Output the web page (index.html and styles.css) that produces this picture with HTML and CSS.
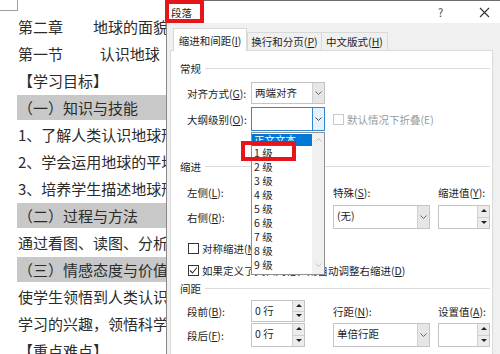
FILE: index.html
```html
<!DOCTYPE html>
<html lang="zh-CN">
<head>
    <meta charset="UTF-8">
    <title>段落</title>
    <link rel="stylesheet" href="styles.css">
</head>
<body>
<div class="page">
    <div class="doc">
        <div class="corner"></div>
        <p class="ln">第二章　　地球的面貌</p>
        <p class="ln">第一节　　&nbsp;&nbsp;认识地球</p>
        <p class="ln">【学习目标】</p>
        <p class="ln hl">（一）知识与技能</p>
        <p class="ln">1、了解人类认识地球形状的过程</p>
        <p class="ln">2、学会运用地球的平均半径</p>
        <p class="ln">3、培养学生描述地球形状</p>
        <p class="ln hl">（二）过程与方法</p>
        <p class="ln">通过看图、读图、分析</p>
        <p class="ln hl">（三）情感态度与价值观</p>
        <p class="ln">使学生领悟到人类认识</p>
        <p class="ln">学习的兴趣，领悟科学</p>
        <p class="ln">【重点难点】</p>
    </div>

    <div class="dlg">
        <div class="titlebar">
            <span class="ttl">段落</span>
            <span class="help">?</span>
            <svg class="close" width="11" height="11" viewBox="0 0 11 11">
                <path d="M1 1 L10 10 M10 1 L1 10" stroke="#333" stroke-width="1.1" fill="none"/>
            </svg>
        </div>
        <div class="mark mark-title"></div>

        <div class="tabs">
            <div class="tab active">缩进和间距(<u>I</u>)</div>
            <div class="tab t2">换行和分页(<u>P</u>)</div>
            <div class="tab t3">中文版式(<u>H</u>)</div>
        </div>

        <div class="panel">
            <div class="group g1"><span>常规</span><i></i></div>

            <div class="row r1">
                <span class="lbl">对齐方式(<u>G</u>):</span>
                <div class="sel"><span>两端对齐</span><b class="arr"><svg width="7" height="4" viewBox="0 0 7 4"><polyline points="0.5,0.5 3.5,3.5 6.5,0.5" fill="none" stroke="#666"/></svg></b></div>
            </div>

            <div class="row r2">
                <span class="lbl">大纲级别(<u>O</u>):</span>
                <div class="sel focus"><span></span><b class="arr"><svg width="7" height="4" viewBox="0 0 7 4"><polyline points="0.5,0.5 3.5,3.5 6.5,0.5" fill="none" stroke="#444"/></svg></b></div>
                <label class="cb off span2"><i class="box"></i>默认情况下折叠(E)</label>
            </div>

            <div class="group g2"><span>缩进</span><i></i></div>

            <div class="row r3">
                <span class="lbl">左侧(<u>L</u>):</span>
                <span></span>
                <span class="lbl">特殊(<u>S</u>):</span>
                <span class="lbl">缩进值(<u>Y</u>):</span>
            </div>

            <div class="row r4">
                <span class="lbl">右侧(<u>R</u>):</span>
                <span></span>
                <div class="sel"><span>(无)</span><b class="arr"><svg width="7" height="4" viewBox="0 0 7 4"><polyline points="0.5,0.5 3.5,3.5 6.5,0.5" fill="none" stroke="#666"/></svg></b></div>
                <div class="spin"><span></span><b class="btns"><em class="up"></em><em class="dn"></em></b></div>
            </div>

            <label class="cb c1"><i class="box"></i>对称缩进(<u>M</u>)</label>
            <label class="cb c2"><i class="box"><svg width="9" height="9" viewBox="0 0 9 9"><polyline points="1,4.5 3.5,7 8,1.5" fill="none" stroke="#333" stroke-width="1.1"/></svg></i>如果定义了文档网格，则自动调整右缩进(<u>D</u>)</label>

            <div class="group g3"><span>间距</span><i></i></div>

            <div class="row r5">
                <span class="lbl">段前(<u>B</u>):</span>
                <div class="spin short"><span>0 行</span><b class="btns"><em class="up"></em><em class="dn"></em></b></div>
                <span class="lbl">行距(<u>N</u>):</span>
                <span class="lbl">设置值(<u>A</u>):</span>
            </div>

            <div class="row r6">
                <span class="lbl">段后(<u>F</u>):</span>
                <div class="spin short"><span>0 行</span><b class="btns"><em class="up"></em><em class="dn"></em></b></div>
                <div class="sel"><span>单倍行距</span><b class="arr"><svg width="7" height="4" viewBox="0 0 7 4"><polyline points="0.5,0.5 3.5,3.5 6.5,0.5" fill="none" stroke="#666"/></svg></b></div>
                <div class="spin"><span></span><b class="btns"><em class="up"></em><em class="dn"></em></b></div>
            </div>

            <!-- 展开的下拉列表 -->
            <div class="dropdown">
                <ul>
                    <li class="cur">正文文本</li>
                    <li>1 级</li>
                    <li>2 级</li>
                    <li>3 级</li>
                    <li>4 级</li>
                    <li>5 级</li>
                    <li>6 级</li>
                    <li>7 级</li>
                    <li>8 级</li>
                    <li>9 级</li>
                </ul>
                <div class="sbar">
                    <svg width="7" height="4" viewBox="0 0 7 4"><polyline points="0.5,3.5 3.5,0.5 6.5,3.5" fill="none" stroke="#c2c2c2"/></svg>
                    <svg width="7" height="4" viewBox="0 0 7 4"><polyline points="0.5,0.5 3.5,3.5 6.5,0.5" fill="none" stroke="#c2c2c2"/></svg>
                </div>
            </div>
            <div class="mark mark-item"></div>
        </div>
    </div>
</div>
</body>
</html>
```

FILE: styles.css
```css
* {
    margin: 0;
    padding: 0;
    box-sizing: border-box;
}

body {
    background: #fff;
    font-family: "Noto Sans CJK SC", "Noto Sans", sans-serif;
}

.page {
    display: flex;
    width: 500px;
    height: 354px;
    overflow: hidden;
}

/* 左侧文档 */
.doc {
    flex: none;
    width: 166px;
    overflow: hidden;
    background: #fff;
}

.corner {
    width: 18px;
    height: 11px;
    margin-bottom: 2px;
    border-right: 1px solid #a0a0a0;
    border-bottom: 1px solid #a0a0a0;
}

.ln {
    height: 27px;
    line-height: 27px;
    padding-left: 18px;
    font-size: 15px;
    color: #2b2b2b;
    white-space: nowrap;
}

.hl {
    height: 25px;
    line-height: 25px;
    margin: 1px 0 1px 17px;
    padding-left: 1px;
    background: #c8c8c8;
}

/* 对话框 */
.dlg {
    position: relative;
    flex: 1;
    background: #f0f0f0;
    border-left: 1px solid #8a8a8a;
    font-size: 10.5px;
    color: #1e1e1e;
}

.titlebar {
    display: flex;
    align-items: center;
    height: 23px;
    background: #fff;
    border-top: 1px solid #6e6e6e;
    padding-left: 4px;
}

.ttl {
    font-size: 10.5px;
}

.help {
    margin-left: auto;
    width: 10px;
    font-size: 11px;
    color: #444;
}

.close {
    margin: 0 11px 0 31px;
}

.mark {
    position: absolute;
    border: 4px solid #e8141b;
}

.mark-title {
    left: -2px;
    top: 0;
    width: 39px;
    height: 23px;
}

.tabs {
    display: flex;
    align-items: flex-end;
    height: 27px;
    padding-left: 6px;
}

.tab {
    flex: none;
    height: 18px;
    line-height: 17px;
    border: 1px solid #d9d9d9;
    border-bottom: none;
    background: #f0f0f0;
    text-align: center;
    white-space: nowrap;
}

.tab.active {
    position: relative;
    z-index: 2;
    width: 74px;
    height: 23px;
    line-height: 24px;
    margin-bottom: -1px;
    background: #fff;
}

.t2 {
    width: 75px;
}

.t3 {
    width: 66px;
    border-left: none;
}

.panel {
    position: relative;
    height: 320px;
    margin: 0 8px 0 3px;
    padding: 0 2px 0 9px;
    background: #fff;
    border: 1px solid #dadada;
}

.group {
    display: flex;
    align-items: center;
    height: 14px;
}

.group i {
    flex: 1;
    margin-left: 4px;
    border-top: 1px solid #dcdcdc;
}

.g1 { margin-top: 10px; }
.g2 { margin-top: 28px; }
.g3 { margin-top: 4px; }

.row {
    display: grid;
    grid-template-columns: 56px 74px 97px 52px;
    column-gap: 8px;
    align-items: center;
    padding-left: 7px;
}

.r1 { height: 22px; margin-top: 7px; }
.r2 { height: 24px; margin-top: 3px; }
.r3 { height: 14px; margin-top: 12px; }
.r4 { height: 24px; margin-top: 6px; }
.r5 { height: 22px; margin-top: 5px; }
.r6 { height: 24px; margin-top: 1px; }

.lbl {
    white-space: nowrap;
}

.span2 {
    grid-column: 3 / 5;
}

.sel, .spin {
    display: flex;
    height: 100%;
    border: 1px solid #c4c4c4;
    background: #fff;
}

.sel span, .spin span {
    flex: 1;
    padding-left: 3px;
    line-height: 20px;
    white-space: nowrap;
}

.arr {
    display: flex;
    align-items: center;
    justify-content: center;
    width: 12px;
    border-left: 1px solid #d0d0d0;
    background: #e6e6e6;
}

.sel.focus {
    border-color: #2f86d6;
}

.sel.focus .arr {
    background: #e5f1fb;
    border-left-color: #2f86d6;
}

.spin.short {
    width: 54px;
}

.btns {
    display: flex;
    flex-direction: column;
    width: 12px;
    border-left: 1px solid #d0d0d0;
}

.btns em {
    flex: 1;
    position: relative;
    background: #ececec;
}

.btns em + em {
    border-top: 1px solid #d0d0d0;
}

.btns em::after {
    content: "";
    position: absolute;
    left: 3px;
    top: 50%;
    margin-top: -2px;
    border-left: 3px solid transparent;
    border-right: 3px solid transparent;
}

.btns .up::after {
    border-bottom: 3px solid #222;
}

.btns .dn::after {
    border-top: 3px solid #222;
}

.cb {
    display: flex;
    align-items: center;
    height: 14px;
    padding-left: 8px;
    white-space: nowrap;
}

.cb .box {
    display: flex;
    align-items: center;
    justify-content: center;
    width: 11px;
    height: 11px;
    margin-right: 3px;
    border: 1px solid #333;
    background: #fff;
}

.cb.off {
    padding-left: 0;
    color: #9a9a9a;
}

.cb.off .box {
    border-color: #c8c8c8;
}

.c1 { margin-top: 12px; }
.c2 { margin-top: 8px; }

/* 下拉列表 */
.dropdown {
    position: absolute;
    left: 80px;
    top: 81px;
    display: flex;
    width: 74px;
    height: 143px;
    border: 1px solid #8f8f8f;
    background: #fff;
}

.dropdown ul {
    flex: 1;
    list-style: none;
}

.dropdown li {
    height: 14px;
    line-height: 14px;
    padding-left: 2px;
    white-space: nowrap;
}

.dropdown li.cur {
    margin-top: 1px;
    height: 12px;
    line-height: 12px;
    background: #0078d7;
    color: #fff;
}

.sbar {
    display: flex;
    flex-direction: column;
    justify-content: space-between;
    align-items: center;
    width: 12px;
    padding: 5px 0 7px;
    background: #f0f0f0;
}

.mark-item {
    left: 70px;
    top: 90px;
    width: 55px;
    height: 20px;
}
```
